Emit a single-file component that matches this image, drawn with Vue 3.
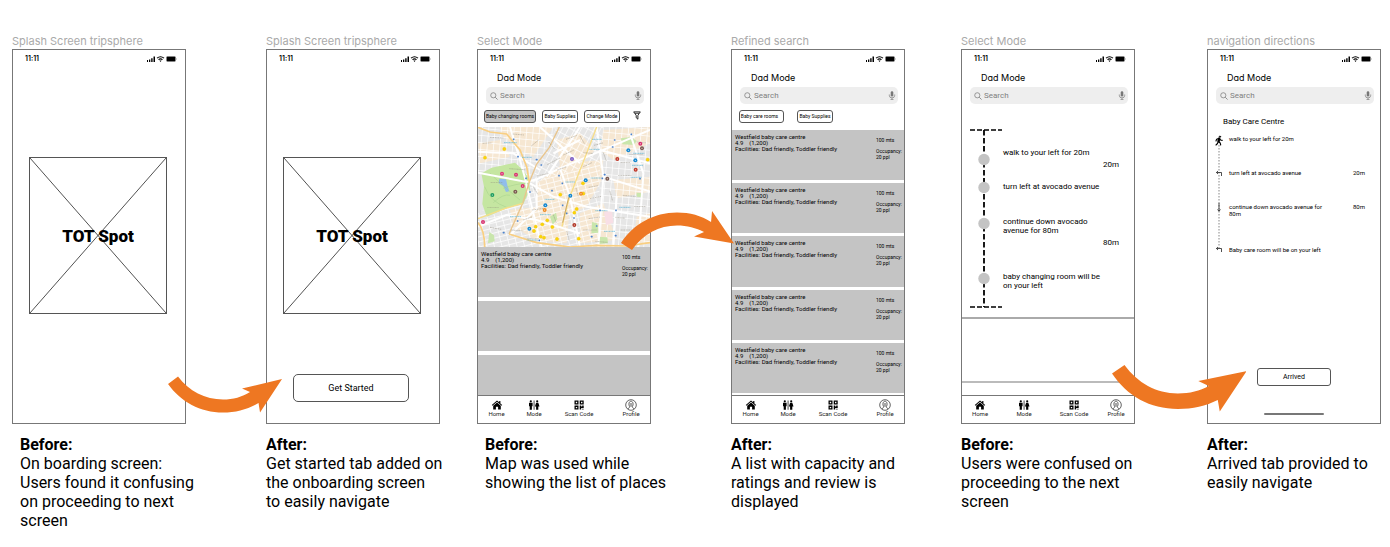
<script setup>
const splash = 'Splash Screen tripsphere'

const screens = [
  {
    kind: 'splash', label: splash, heading: 'Before:', indent: true,
    lines: ['On boarding screen:', 'Users found it confusing', 'on proceeding to next', 'screen'],
    arrow: {
      name: 'arrow-start', box: '0 0 116 38',
      d: 'M1 9 L11 1.5 C22 16 38 24.500 56 24.500 C66 24.500 75 22 83 17 L75 13.500 L115 4 L93 37.500 L91.500 28 C81 34 69 37.500 56 37.500 C33 37.500 14 27 1 9Z'
    }
  },
  {
    kind: 'splash', label: splash, heading: 'After:', start: true,
    lines: ['Get started tab added on', 'the onboarding screen', 'to easily navigate']
  },
  {
    kind: 'map', label: 'Select Mode', heading: 'Before:', indent: true,
    lines: ['Map was used while', 'showing the list of places'],
    tags: ['Baby changing rooms', 'Baby Supplies', 'Change Mode'],
    arrow: {
      name: 'arrow-list', box: '0 0 116 40',
      d: 'M1 33 L12 40 C23 24 39 15.500 57 15.500 C67 15.500 76 18 84 22 L74 26.500 L114 33.500 L92 1 L91 12 C81 5.500 70 2.500 57 2.500 C34 2.500 13 14 1 33Z'
    }
  },
  {
    kind: 'list', label: 'Refined search', heading: 'After:',
    lines: ['A list with capacity and', 'ratings and review is', 'displayed'],
    tags: ['Baby care rooms', 'Baby Supplies']
  },
  {
    kind: 'route', label: 'Select Mode', heading: 'Before:',
    lines: ['Users were confused on', 'proceeding to the next', 'screen'],
    arrow: {
      name: 'arrow-arrive', box: '0 0 136 48',
      d: 'M1 9.500 L13.500 1 C27 19 45 29.500 67 29.500 C79 29.500 89 27 98 22 L87.500 17 L136 7 L109 47.500 L107 36 C95 42 82 45 67 45 C39 45 16 32 1 9.500Z'
    }
  },
  {
    kind: 'steps', label: 'navigation directions', heading: 'After:',
    lines: ['Arrived tab provided to', 'easily navigate']
  }
]

const routeSteps = [
  { text: 'walk to your left for 20m', distance: '20m' },
  { text: 'turn left at avocado avenue' },
  { text: 'continue down avocado avenue for 80m', distance: '80m' },
  { text: 'baby changing room will be on your left' }
]

const directionSteps = [
  { text: 'walk to your left for 20m' },
  { text: 'turn left at avocado avenue', distance: '20m' },
  { text: 'continue down avocado avenue for 80m', distance: '80m' },
  { text: 'Baby care room will be on your left' }
]

const pins = [
  [96, 161, '#e0357a'], [138, 164, '#d8326f'], [158, 198, '#d8326f'], [39, 306, '#d8326f'], [511, 71, '#d8326f'],
  [67, 225, '#1c9c60'], [136, 215, '#7b5a50'], [412, 176, '#7b5a50'], [516, 85, '#7b5a50'],
  [306, 117, '#7a59c4'], [442, 117, '#c0392b'], [497, 149, '#c0392b'], [313, 315, '#b23a2a'],
  [475, 91, '#1688d0'], [496, 121, '#1688d0'], [347, 181, '#1688d0'], [301, 227, '#1688d0'], [226, 256, '#1688d0'],
  [178, 326, '#1688d0'], [333, 221, '#f08a24'], [224, 270, '#f08a24']
]
const dots = [
  [103, 87], [45, 113], [533, 119], [339, 190], [271, 224], [320, 267], [313, 278], [232, 301], [217, 313],
  [197, 320], [192, 333], [247, 321], [212, 350], [222, 353], [261, 357], [326, 356], [340, 221]
]
const stops = [
  [131, 58], [144, 110], [200, 119], [214, 135], [168, 175], [180, 216], [267, 167], [246, 212], [277, 190],
  [434, 60], [428, 81], [404, 164], [397, 175], [510, 176], [390, 271], [438, 271], [143, 303], [101, 338],
  [290, 280], [312, 294], [278, 256], [365, 350], [437, 347], [482, 348], [208, 361], [484, 43], [380, 318]
]
const names = [
  [38, 70, 26, -3], [60, 52, 40, 3], [128, 42, 34, 5], [184, 78, 30, -40], [236, 66, 26, 50], [288, 58, 34, -20],
  [330, 48, 26, 60], [372, 76, 28, -15], [340, 98, 30, 5], [280, 105, 34, -25], [232, 134, 44, -28], [118, 146, 48, 4],
  [62, 188, 36, 0], [52, 262, 34, 0], [190, 200, 26, 60], [200, 168, 36, -12], [262, 150, 30, -20], [340, 140, 30, -25],
  [400, 98, 26, 70], [444, 166, 40, 0], [478, 104, 40, 0], [452, 128, 28, 0], [500, 66, 28, 5], [356, 202, 30, -10],
  [318, 204, 26, 75], [360, 236, 34, -12], [420, 214, 28, 75], [458, 226, 40, 5], [492, 260, 34, 0], [436, 292, 30, 5],
  [356, 296, 34, -8], [340, 330, 40, 0], [290, 334, 30, 75], [250, 284, 26, 70], [186, 270, 36, -8], [160, 300, 30, -20],
  [124, 330, 36, 5], [60, 322, 34, 10], [172, 356, 34, 0], [376, 364, 36, 5], [452, 330, 32, 0], [498, 318, 30, 70]
]
const waters = [
  [102, 68, 38], [156, 112, 30], [358, 88, 32], [366, 58, 30], [486, 136, 34], [362, 174, 32], [482, 172, 34],
  [224, 238, 30], [376, 272, 36], [448, 262, 34], [120, 290, 34], [210, 284, 32], [170, 360, 34], [286, 186, 30], [402, 334, 34], [490, 100, 34]
]
</script>

<template>
  <main class="board">
    <figure v-for="(s, i) in screens" :key="i" class="shot" :class="'shot-' + (i + 1)">
      <h2 class="label">{{ s.label }}</h2>
      <div class="device">
        <section class="phone">
          <header class="status">
            <span>11:11</span>
            <svg viewBox="0 0 31 8" class="status-icons" aria-hidden="true">
              <path d="M1 5h1v2H1zM3 4.500h1.300V7H3zM5.200 3.200h1.400V7H5.200zM7.500 1.500H9V7H7.500z" />
              <path d="M11 3.200Q14.500.2 18 3.200M12.500 4.700Q14.500 3 16.500 4.700" fill="none" stroke="#000" stroke-width="1.100" />
              <path d="M13.400 5.600h2.200L14.500 7z" />
              <rect x="20.500" y="1.500" width="9" height="5" rx="1" stroke="#888" stroke-width=".6" />
              <path d="M30.200 3v2" stroke="#999" stroke-width=".6" />
            </svg>
          </header>

          <template v-if="s.kind === 'splash'">
            <div class="logo-box">
              <svg viewBox="0 0 138 157" preserveAspectRatio="none" class="cross" aria-hidden="true">
                <path d="M0 0L138 157M138 0L0 157" fill="none" stroke="#222" stroke-width=".8" />
              </svg>
              <strong>TOT Spot</strong>
            </div>
            <button v-if="s.start" type="button" class="start">Get Started</button>
          </template>

          <template v-else>
            <h3 class="mode">Dad Mode</h3>
            <label class="search">
              <svg viewBox="0 0 9 9" class="lens" aria-hidden="true">
                <circle cx="3.700" cy="3.700" r="2.900" fill="none" stroke="#777" stroke-width=".8" />
                <path d="M5.900 5.900L8.500 8.500" stroke="#777" stroke-width=".9" />
              </svg>
              <input type="search" placeholder="Search" aria-label="Search" />
              <svg viewBox="0 0 7 9" class="mic" aria-hidden="true">
                <rect x="2.200" y=".3" width="2.600" height="5.200" rx="1.300" fill="#777" />
                <path d="M.8 3.500v.9a2.700 2.500 0 0 0 5.400 0v-.9M3.500 7v1.500M2 8.600h3" fill="none" stroke="#777" stroke-width=".7" />
              </svg>
            </label>
          </template>

          <div v-if="s.tags" class="tags" :class="'tags-' + s.kind">
            <button v-for="(t, n) in s.tags" :key="t" type="button" :class="{ on: s.kind === 'map' && n === 0 }">{{ t }}</button>
            <svg v-if="s.kind === 'map'" viewBox="0 0 8 9" class="filter" aria-hidden="true">
              <path d="M.7.9h6.600L4.900 4.300v3.900L3.200 6.700V4.300z" fill="none" stroke="#111" stroke-width=".9" />
              <path d="M2 2.300h4" stroke="#111" stroke-width=".8" />
            </svg>
          </div>

          <template v-if="s.kind === 'map'">
            <svg viewBox="24 21 516 360" preserveAspectRatio="xMidYMid slice" class="map" role="img" aria-label="Map">
              <defs>
                <pattern id="streetsA" width="22" height="15" patternUnits="userSpaceOnUse" patternTransform="rotate(-14)">
                  <path d="M0 0H22M0 0V15" stroke="#fff" stroke-width="4" />
                </pattern>
                <pattern id="streetsB" width="17" height="24" patternUnits="userSpaceOnUse" patternTransform="rotate(28)">
                  <path d="M0 0H17M0 0V24" stroke="#fff" stroke-width="4" />
                </pattern>
                <pattern id="streetsC" width="19" height="21" patternUnits="userSpaceOnUse" patternTransform="rotate(5)">
                  <path d="M0 0H19M0 0V21" stroke="#fff" stroke-width="4" />
                </pattern>
              </defs>
              <rect x="24" y="21" width="516" height="360" fill="#e6e6e6" />
              <path d="M90 21H250L190 110 150 90 100 50z M260 60L330 40 375 90 345 120 270 140z M200 190L280 130 400 120 395 180 350 260 280 290 200 270z M120 270L300 250 290 370 200 360 130 320z M400 30L540 21V70L430 120 390 90z M330 280L400 250 440 360 330 370z M430 180L540 170V215L440 235z M24 70L90 60 120 110 30 130z M500 290L540 280V370H490z" fill="#f6e7d2" />
              <path d="M24 21H260L180 190 24 160z" fill="url(#streetsC)" />
              <path d="M260 21H400L390 130 180 190z" fill="url(#streetsB)" />
              <path d="M400 21H540V381H385L390 130z" fill="url(#streetsC)" />
              <path d="M180 190L390 130 385 381H24V280z" fill="url(#streetsA)" />
              <path d="M402 275l24-2 4 35-22 8z" fill="#f8dfe6" />
              <path d="M34 160L65 143 135 128 157 148 174 172 180 208 160 252 112 264 50 290 37 252 42 200z" fill="#c5e6a1" />
              <path d="M240 290l18-12 4 20-14 16zM58 336l14 10 2 18-20 6zM452 55l32-4 16 12-8 12-34-2zM366 306l16 4 4 28-22 2zM384 350l28 2 2 18-30 2zM500 218l18 2v12l-18-2z" fill="#c9e6ac" />
              <path d="M88 176l20 2 4 18 6 18-10 2-8-18-14-8z" fill="#90bdec" />
              <path d="M44 200Q60 245 110 262M100 205Q140 190 172 190M60 160Q90 190 150 240M70 248Q100 220 120 226" fill="none" stroke="#a5d08a" stroke-width="1.500" />
              <path d="M24 158L170 186 200 178 270 145 540 30M24 95L130 100 210 150M120 21L150 120 168 185M180 190L250 230 350 260 540 290M168 190L215 381M270 145L300 230 330 381M380 21L400 170 385 381M400 170L540 215M24 320L110 285 200 300 330 340M440 230L430 381M480 40L520 160 505 381M210 21L330 130M330 21L230 170M390 90L540 130M200 180L200 265 120 345M250 100L330 60" fill="none" stroke="#fff" stroke-width="6" />
              <path d="M268 21L238 82 200 132 178 186 158 250 117 342" fill="none" stroke="#e9c58c" stroke-width="4" />
              <path d="M24 22L60 36 110 42 150 90 170 140 178 186M117 342L200 368 300 381M24 308Q44 330 44 381M300 381L380 376 470 378 540 368" fill="none" stroke="#f9cf82" stroke-width="5" />
              <path d="M380 21L350 100 330 150 296 240 276 320M24 296L110 264 158 250" fill="none" stroke="#f8de88" stroke-width="4" />
              <path d="M296 232L278 308" stroke="#cba764" stroke-width="3" />
              <path v-for="(n, k) in names" :key="'n' + k" :d="`M${n[0]} ${n[1]}h${n[2]}`" :transform="`rotate(${n[3]} ${n[0]} ${n[1]})`" class="street-name" />
              <path v-for="(w, k) in waters" :key="'w' + k" :d="`M${w[0]} ${w[1]}h${w[2]}`" class="stop-name" />
              <rect v-for="(p, k) in stops" :key="'s' + k" :x="p[0] - 2.5" :y="p[1] - 2.5" width="5" height="5" rx="1" fill="#4d83cd" />
              <circle v-for="(p, k) in dots" :key="'d' + k" :cx="p[0]" :cy="p[1]" r="5" fill="#fbd508" stroke="#e8bb12" />
              <g v-for="(p, k) in pins" :key="'p' + k">
                <circle :cx="p[0]" :cy="p[1]" r="6" :fill="p[2]" />
                <circle :cx="p[0]" :cy="p[1]" r="1.500" fill="#fff" />
              </g>
            </svg>
          </template>

          <div v-if="s.tags" class="cards" :class="'cards-' + s.kind">
            <article v-for="n in (s.kind === 'map' ? 3 : 5)" :key="n" class="card">
              <template v-if="s.kind === 'list' || n === 1">
                <p>Westfield baby care centre<br />4.9 &nbsp;&nbsp; (1,200)<br />Facilities: Dad friendly, Toddler friendly</p>
                <div class="facts">
                  <p>100 mts</p>
                  <p>Occupancy:<br />20 ppl</p>
                </div>
              </template>
            </article>
          </div>

          <template v-if="s.kind === 'route'">
            <div class="route">
              <svg viewBox="0 0 32 180" class="rail" aria-hidden="true">
                <path d="M0 1H32M0 178H32" stroke="#000" stroke-width="1.600" stroke-dasharray="5 2" />
                <path d="M14 1V178" stroke="#000" stroke-width="1.800" stroke-dasharray="5.500 2.500" />
                <circle v-for="y in [30.5, 58.5, 94.5, 149.5]" :key="y" cx="14" :cy="y" r="5.700" fill="#c4c4c4" />
              </svg>
              <ol class="route-steps">
                <li v-for="r in routeSteps" :key="r.text">
                  <p>{{ r.text }}</p>
                  <span v-if="r.distance">{{ r.distance }}</span>
                </li>
              </ol>
            </div>
            <div class="panel"></div>
            <div class="panel-end"></div>
          </template>

          <template v-if="s.kind === 'steps'">
            <h4 class="place">Baby Care Centre</h4>
            <div class="directions">
              <svg viewBox="0 0 12 120" class="trail" aria-hidden="true">
                <path d="M6 10V113" stroke="#555" stroke-width=".7" stroke-dasharray="1.500 1.500" />
                <g fill="none" stroke="#000" stroke-linecap="round" stroke-linejoin="round">
                  <circle cx="6.900" cy="1.700" r=".8" fill="#000" stroke-width=".5" />
                  <path d="M6 3.700L5.600 6.300" stroke-width="2.400" />
                  <path d="M5.500 6.500L7.200 8 7.700 10M5.100 6.700L4.500 8.500 3 10M5.500 3.400L3.600 4.200 3 6M6.700 3.500L7.600 5 9.200 5.400" stroke-width="1.100" />
                </g>
                <g fill="none" stroke="#222" stroke-width=".8">
                  <path d="M8.500 41V37.500H3.500M5 36L3.400 37.500 5 39" />
                  <path d="M6 68V76M4.500 74.500L6 76.200 7.500 74.500" />
                  <path d="M8.500 117V113.500H3.500M5 112L3.400 113.500 5 115" />
                </g>
              </svg>
              <ol class="direction-steps">
                <li v-for="d in directionSteps" :key="d.text">
                  <p>{{ d.text }}</p>
                  <span v-if="d.distance">{{ d.distance }}</span>
                </li>
              </ol>
            </div>
            <button type="button" class="arrived">Arrived</button>
            <div class="home-bar"></div>
          </template>

          <nav v-if="['map', 'list', 'route'].includes(s.kind)" class="nav" :class="'nav-' + s.kind">
            <a href="#home">
              <svg viewBox="0 0 12 10" aria-hidden="true">
                <path d="M6 .5L.8 5l.6.7L6 1.800l4.600 3.900.6-.7-1.800-1.600V1H8.200v1.300z" />
                <path d="M6 2.500L2.200 5.800V9.500h2.700V6.700h2.200v2.800h2.700V5.800z" />
              </svg>
              Home
            </a>
            <a href="#mode">
              <svg viewBox="0 0 12 10" aria-hidden="true">
                <circle cx="2.800" cy="1.300" r="1.100" /><path d="M1 2.700h3.600v3.500h-.7v3.600H1.700V6.200H1z" />
                <path d="M5.700.5h.7v9.300h-.7z" />
                <circle cx="9.200" cy="1.300" r="1.100" /><path d="M8.100 2.700h2.200l1.200 3.800h-1.200v3.300H8.100V6.500H6.900z" />
              </svg>
              Mode
            </a>
            <a href="#scan">
              <svg viewBox="0 0 12 10" aria-hidden="true">
                <path fill-rule="evenodd" d="M1.500.5h4v4h-4zM2.800 1.800v1.400h1.400V1.800zM6.700.5h4v4h-4zM8 1.800v1.400h1.400V1.800zM1.500 5.600h4v4h-4zM2.800 6.900v1.400h1.400V6.900z" />
                <path d="M6.700 5.600h1.500v1h1v-1h1.500v2.500H8.200v1.500H6.700zM9 8.700h.8v.9H9zM10.200 8.700h.6v.9h-.6z" />
              </svg>
              Scan Code
            </a>
            <a href="#profile">
              <svg viewBox="0 0 12 12" class="avatar" aria-hidden="true">
                <g fill="none" stroke="#222" stroke-width=".7">
                  <circle cx="6" cy="6" r="5.300" />
                  <path d="M3 10C3.300 8.700 4.800 8.600 4.900 7.800 3.200 6 3.800 2.200 6 2.200S8.800 6 7.100 7.800C7.200 8.600 8.700 8.700 9 10" />
                  <path d="M5.300 4v3.500M6.700 4v3.500" stroke-width=".5" />
                </g>
              </svg>
              Profile
            </a>
          </nav>
        </section>
        <svg v-if="s.arrow" :viewBox="s.arrow.box" class="arrow" :class="s.arrow.name" aria-hidden="true">
          <path :d="s.arrow.d" fill="#ee7722" />
        </svg>
      </div>
      <figcaption :class="{ indent: s.indent }">
        <strong>{{ s.heading }}</strong>
        <span v-for="l in s.lines" :key="l">{{ l }}</span>
      </figcaption>
    </figure>
  </main>
</template>

<style>
body { background: #fff; }
</style>

<style scoped>
.board {
  display: grid;
  grid-template-columns: 174fr 80fr 174fr 37fr 174fr 80fr 174fr 56fr 174fr 72fr 174fr;
  padding: 34px 9px 16px 12px;
  box-sizing: border-box;
  overflow: hidden;
  font-family: Roboto, "Liberation Sans", sans-serif;
  color: #000;
}
.board * { box-sizing: border-box; }
.shot { margin: 0; min-width: 0; }
.shot-2 { grid-column: 3; }
.shot-3 { grid-column: 5; }
.shot-4 { grid-column: 7; }
.shot-5 { grid-column: 9; }
.shot-6 { grid-column: 11; }
h2, h3, h4, p, ol { margin: 0; padding: 0; font-weight: 400; list-style: none; }
button { padding: 0; background: #fff; border: 1px solid #555; color: #000; font-family: inherit; white-space: nowrap; }
.label { font: 11px/15px Inter, sans-serif; color: #aaa; white-space: nowrap; }
.device { position: relative; }
.phone {
  display: flex;
  flex-direction: column;
  aspect-ratio: 174 / 375;
  border: 1px solid #777;
  overflow: hidden;
  background: #fff;
}
.status {
  display: flex;
  flex: none;
  align-items: center;
  justify-content: space-between;
  height: 18px;
  padding: 0 8px 0 12px;
  font: 600 7px/18px Inter, sans-serif;
}
.status-icons { width: 31px; height: 8px; }
.logo-box {
  display: grid;
  place-items: center;
  height: 157px;
  flex: none;
  margin: 89px 18px 0 16px;
  border: 1px solid #555;
}
.cross { grid-area: 1 / 1; width: 100%; height: 155px; }
.logo-box strong { grid-area: 1 / 1; font-size: 17px; line-height: 20px; font-weight: 900; }
.start { width: 116px; height: 28px; margin: 60px 0 0 26px; border-radius: 5px; font-size: 9px; line-height: 11px; }
.mode { flex: none; padding-left: 19px; font: 9px/19px Inter, sans-serif; font-feature-settings: "cv11"; }
.search {
  display: flex;
  flex: none;
  align-items: center;
  height: 17px;
  margin: 0 6px 0 8px;
  padding: 0 2px 0 4px;
  border-radius: 5px;
  background: #eee;
}
.lens { width: 8px; height: 8px; flex: none; }
.mic { width: 8px; height: 9px; flex: none; }
.search input { flex: 1; min-width: 0; padding: 0 0 0 2px; border: 0; background: none; font: 8px/10px Roboto, sans-serif; outline: 0; appearance: none; }
.search input::placeholder { color: #808080; opacity: 1; }
.tags { display: flex; flex: none; align-items: center; gap: 6px; padding: 6px 9px 4px 6px; }
.tags button { height: 13px; width: 36px; border-radius: 3px; font-size: 5px; line-height: 7px; }
.tags .on { background: #c4c4c4; width: 52px; }
.tags-list { gap: 13px; padding: 6px 7px 7px; }
.tags-list button:first-child { width: 45px; padding-right: 4px; }
.filter { width: 8px; height: 9px; margin: 0 0 3px auto; }
.map { flex: none; width: 100%; height: 120px; display: block; }
.street-name { stroke: #8b8577; stroke-width: 2; stroke-dasharray: 4 1 2 1 5 2; opacity: .6; }
.stop-name { stroke: #5fb6d6; stroke-width: 3; stroke-dasharray: 3 1 5 1; opacity: .7; }
.cards { flex: 1; min-height: 0; display: flex; flex-direction: column; }
.cards-map { gap: 4px; }
.cards-map .card { flex: 0 0 50px; }
.cards-map .card:last-child { flex: 1; }
.cards-list { gap: 3px; padding-bottom: 2px; }
.cards-list .card { flex: 1; }
.card {
  display: grid;
  grid-template-columns: 141fr 28fr;
  padding: 4px 0 0 3px;
  background: #c4c4c4;
  font-size: 6px;
  line-height: 6px;
  overflow: hidden;
  white-space: nowrap;
}
.facts { display: grid; align-content: start; gap: 5px; padding-top: 3px; font-size: 5px; }
.nav { display: grid; flex: none; grid-template-columns: 37fr 38fr 52fr 45fr; height: 28px; padding-top: 4px; border-top: 1px solid #777; background: #fff; }
.nav a { display: flex; flex-direction: column; align-items: center; color: #222; text-decoration: none; font-size: 6px; line-height: 7px; white-space: nowrap; }
.nav a:last-child { padding-left: 7px; }
.nav svg { width: 12px; height: 10px; fill: #000; }
.nav .avatar { height: 12px; margin: -1px 0; }
.nav-route { grid-template-columns: 36fr 52fr 48fr 36fr; }
.nav.nav-route a:last-child { padding-left: 0; }
.route { display: flex; flex: none; gap: 1px; height: 213px; padding: 25px 15px 0 8px; }
.rail { width: 32px; height: 180px; flex: none; }
.route-steps { flex: 1; display: grid; align-content: start; grid-template-rows: 34px 35px 55px 18px; padding-top: 19px; font-size: 8px; line-height: 9px; }
.route-steps p { max-width: 104px; }
.route-steps span { display: block; padding-top: 3px; text-align: right; }
.panel { flex: 1; border-top: 2px solid #aaa; border-bottom: 2px solid #bbb; }
.panel-end { flex: none; height: 12px; }
.place { flex: none; padding: 13px 0 8px 15px; font-size: 8px; line-height: 10px; }
.directions { display: flex; gap: 4px; padding: 0 15px 0 5px; }
.trail { width: 12px; height: 120px; flex: none; }
.direction-steps { flex: 1; display: grid; align-content: start; grid-template-rows: 34px 34px 43px 7px; font-size: 6px; line-height: 7px; }
.direction-steps li { display: flex; justify-content: space-between; }
.direction-steps p { max-width: 100px; }
.arrived { width: 74px; height: 18px; margin: auto auto 0; border-radius: 3px; font-size: 7px; line-height: 9px; }
.home-bar { flex: none; width: 60px; height: 2px; margin: 27px auto 8px; border-radius: 1px; background: #777; }
.arrow { position: absolute; z-index: 2; display: block; }
.arrow-start { left: 89%; top: 87%; width: 66.700%; }
.arrow-list { left: 82%; top: 43%; width: 66.700%; }
.arrow-arrive { left: 86%; top: 84%; width: 78%; }
figcaption { padding-top: 11px; font-size: 16px; line-height: 19px; white-space: nowrap; }
figcaption.indent { padding-left: 8px; }
figcaption strong, figcaption span { display: block; }
</style>
